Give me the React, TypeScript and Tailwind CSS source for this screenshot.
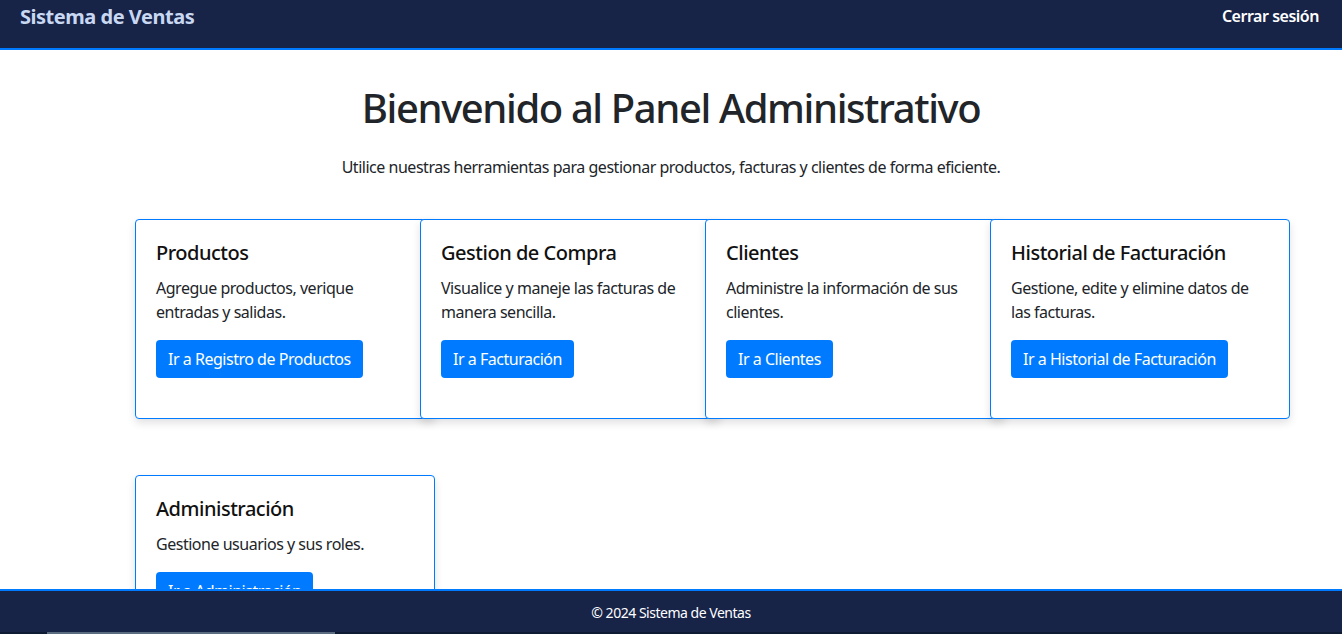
import React from 'react';

const cards = [
  { title: 'Productos', text: 'Agregue productos, verique entradas y salidas.', cta: 'Ir a Registro de Productos' },
  { title: 'Gestion de Compra', text: 'Visualice y maneje las facturas de manera sencilla.', cta: 'Ir a Facturación' },
  { title: 'Clientes', text: 'Administre la información de sus clientes.', cta: 'Ir a Clientes' },
  { title: 'Historial de Facturación', text: 'Gestione, edite y elimine datos de las facturas.', cta: 'Ir a Historial de Facturación' },
];

const Card = ({ title, text, cta }: { title: string; text: string; cta: string }) => (
  <div className="w-[300px] shrink-0 bg-white border border-[#007bff] rounded-[4px] shadow-[0_4px_8px_rgba(0,0,0,0.12)] px-5 pt-5 pb-10">
    <h5 className="mt-[1px] text-[20px] leading-[24px] font-medium text-[#111]">{title}</h5>
    <p className="mt-[11px] text-[16px] leading-[24px] text-[#212529] pr-4">{text}</p>
    <button className="mt-[16px] h-[38px] px-3 rounded-[4px] bg-[#007bff] text-white text-[16px] leading-[24px]">{cta}</button>
  </div>
);

const App: React.FC = () => {
  return (
    <div className="min-h-screen bg-white font-['Noto_Sans',sans-serif] tracking-[-0.03em] text-[#212529]">
      <nav className="h-[50px] bg-[#172347] border-b-2 border-[#007bff] flex items-start justify-between pl-5 pr-[23px] pt-[4px]">
        <span className="text-[20px] leading-[26px] font-bold text-[#c9d8f2]">Sistema de Ventas</span>
        <span className="text-[16px] leading-[24px] font-semibold text-white">Cerrar sesión</span>
      </nav>

      <main className="pb-[60px]">
        <h1 className="mt-[34px] text-center text-[40px] leading-[48px] font-medium tracking-[-0.035em] text-[#212529]">
          Bienvenido al Panel Administrativo
        </h1>
        <p className="mt-[23px] text-center text-[16px] leading-[24px]">
          Utilice nuestras herramientas para gestionar productos, facturas y clientes de forma eficiente.
        </p>

        <div className="mt-[40px] pl-[135px] flex">
          {cards.map((c) => (
            <div key={c.title} className="w-[285px] shrink-0">
              <Card {...c} />
            </div>
          ))}
        </div>

        <div className="mt-[56px] pl-[135px] flex">
          <Card title="Administración" text="Gestione usuarios y sus roles." cta="Ir a Administración" />
        </div>
      </main>

      <footer className="fixed bottom-0 left-0 right-0 h-[45px] bg-[#172347] border-t-2 border-[#007bff] flex flex-col">
        <div className="flex-1 flex items-center justify-center pt-[1px] text-[14px] text-white">© 2024 Sistema de Ventas</div>
        <div className="h-[2px] bg-[#0f1a33] pl-[47px]">
          <div className="w-[288px] h-[2px] bg-[#5b6b80]" />
        </div>
      </footer>
    </div>
  );
};

export default App;
